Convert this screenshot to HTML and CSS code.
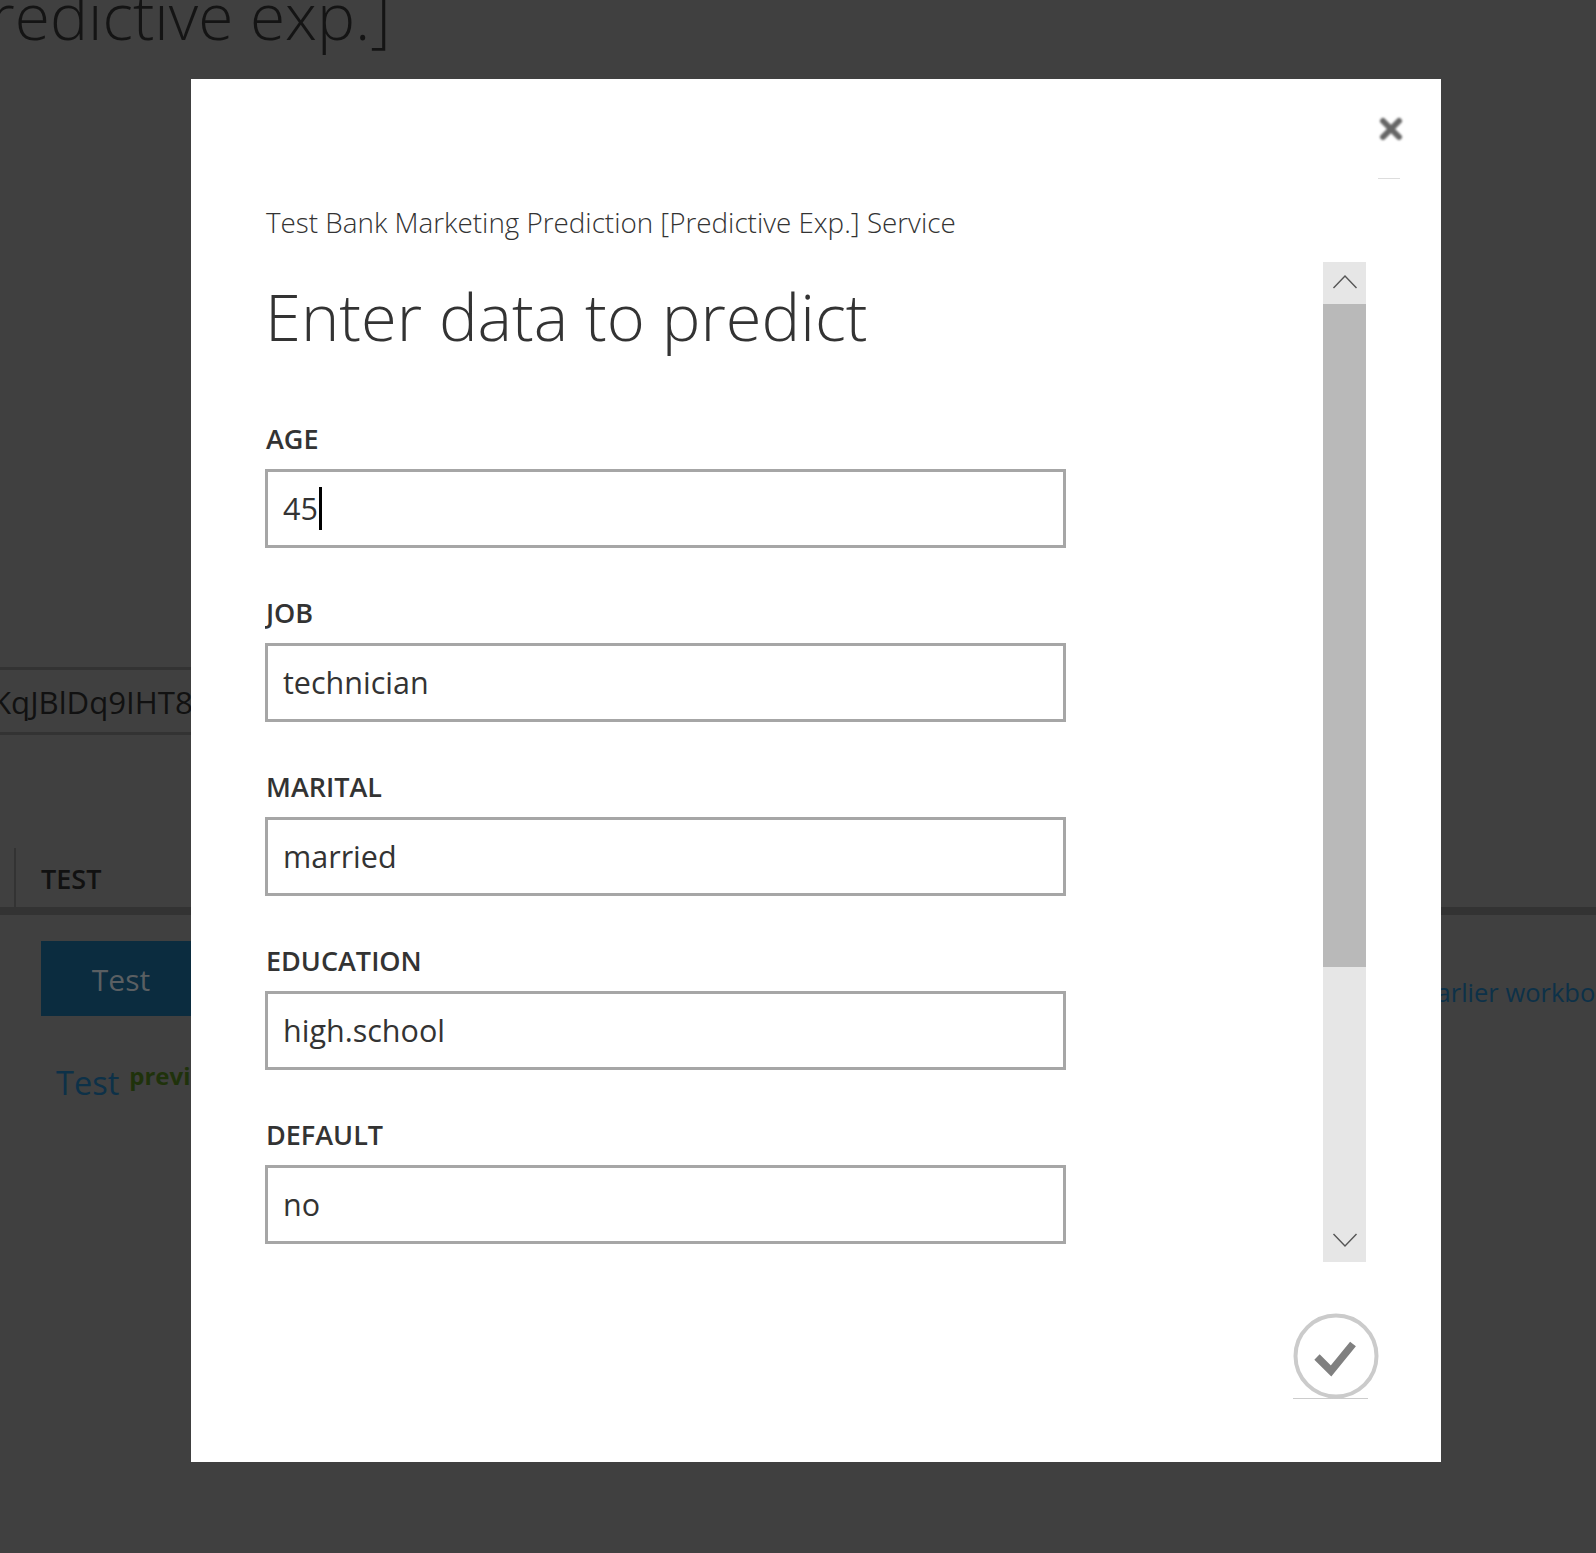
FILE: index.html
```html
<!DOCTYPE html>
<html lang="en">

<head>
    <meta charset="UTF-8">
    <meta name="viewport" content="width=device-width, initial-scale=1.0">
    <title>Enter data to predict</title>
    <link rel="stylesheet" href="styles.css">
</head>

<body>

    <!-- Page behind the dialog -->
    <div class="page">
        <div class="page-title">[Predictive exp.]</div>

        <div class="key-box">
            <span class="key-text">KqJBlDq9IHT8a</span>
        </div>

        <div class="tabs">
            <div class="tab">TEST</div>
        </div>

        <div class="actions">
            <div class="btn-test">Test</div>
            <a class="link-old">earlier workbook</a>
        </div>

        <div class="test-row">
            <a class="link-test">Test</a>
            <span class="tag-preview">preview</span>
        </div>
    </div>

    <!-- Dialog -->
    <div class="modal">
        <div class="modal-top">
            <div class="close-btn">
                <svg width="24" height="24" viewBox="0 0 24 24">
                    <path d="M4 4 L20 20 M20 4 L4 20" stroke="#666" stroke-width="6" stroke-linecap="round" />
                </svg>
            </div>
        </div>

        <div class="modal-subtitle">Test Bank Marketing Prediction [Predictive Exp.] Service</div>

        <div class="modal-middle">
            <div class="form-area">
                <h1 class="form-title">Enter data to predict</h1>

                <div class="field">
                    <div class="field-label">AGE</div>
                    <div class="field-input">45<span class="caret"></span></div>
                </div>
                <div class="field">
                    <div class="field-label">JOB</div>
                    <div class="field-input">technician</div>
                </div>
                <div class="field">
                    <div class="field-label">MARITAL</div>
                    <div class="field-input">married</div>
                </div>
                <div class="field">
                    <div class="field-label">EDUCATION</div>
                    <div class="field-input">high.school</div>
                </div>
                <div class="field">
                    <div class="field-label">DEFAULT</div>
                    <div class="field-input">no</div>
                </div>
            </div>

            <div class="scrollbar">
                <div class="scroll-arrow">
                    <svg width="26" height="16" viewBox="0 0 26 16">
                        <path d="M1.5 14 L13 2 L24.5 14" fill="none" stroke="#555" stroke-width="1.4" />
                    </svg>
                </div>
                <div class="scroll-thumb"></div>
                <div class="scroll-rest"></div>
                <div class="scroll-arrow">
                    <svg width="26" height="16" viewBox="0 0 26 16">
                        <path d="M1.5 2 L13 14 L24.5 2" fill="none" stroke="#555" stroke-width="1.4" />
                    </svg>
                </div>
            </div>
        </div>

        <div class="modal-bottom">
            <div class="ok-btn">
                <svg width="86" height="86" viewBox="0 0 86 86">
                    <circle cx="43" cy="43" r="40.5" fill="#fff" stroke="#cbcbcb" stroke-width="4" />
                    <path d="M24 44 L38 58 L60 31" fill="none" stroke="#808080" stroke-width="7.5" />
                </svg>
            </div>
        </div>
    </div>

</body>

</html>
```

FILE: styles.css
```css
* {
    box-sizing: border-box;
}

html,
body {
    height: 100%;
}

body {
    margin: 0;
    background-color: #404040;
    font-family: "Open Sans", "Liberation Sans", sans-serif;
    color: #333;
    overflow: hidden;
}

/* page behind the dialog */
.page {
    height: 1553px;
    overflow: hidden;
}

.page-title {
    margin: -30px 0 0 -68px;
    font-size: 64px;
    line-height: 92px;
    font-weight: 300;
    color: #141414;
    white-space: nowrap;
}

.key-box {
    margin-top: 605px;
    width: 800px;
    height: 68px;
    border-top: 3px solid #333;
    border-bottom: 3px solid #333;
    overflow: hidden;
}

.key-text {
    display: block;
    margin-left: -8px;
    font-size: 31.2px;
    line-height: 64px;
    color: #111;
    white-space: nowrap;
}

.tabs {
    margin-top: 113px;
    height: 67px;
    border-bottom: 8px solid #333;
    padding-left: 14px;
}

.tab {
    height: 59px;
    border-left: 2px solid #333;
    padding-left: 25px;
    font-size: 27px;
    line-height: 62px;
    font-weight: 600;
    color: #111;
}

.actions {
    margin-top: 26px;
    padding-left: 41px;
    display: flex;
    justify-content: space-between;
}

.btn-test {
    width: 160px;
    height: 75px;
    background-color: #0b2c3f;
    color: #5a5f62;
    font-size: 30px;
    line-height: 78px;
    text-align: center;
}

.link-old {
    margin-top: 31px;
    margin-right: -28px;
    font-size: 25.5px;
    line-height: 40px;
    color: #0d3148;
    white-space: nowrap;
}

.test-row {
    margin-top: 42px;
    padding-left: 56px;
    display: flex;
    align-items: flex-start;
    gap: 10px;
}

.link-test {
    font-size: 32.5px;
    line-height: 50px;
    color: #0d3148;
}

.tag-preview {
    font-size: 24px;
    line-height: 36px;
    font-weight: 700;
    color: #1f320b;
}

/* dialog */
.modal {
    position: absolute;
    left: 191px;
    top: 79px;
    width: 1250px;
    height: 1383px;
    background-color: #fff;
    display: flex;
    flex-direction: column;
}

.modal-top {
    height: 100px;
    display: flex;
    justify-content: flex-end;
    padding: 38px 41px 0 0;
}

.close-btn {
    width: 22px;
    height: 62px;
    border-bottom: 1px solid #ddd;
}

.close-btn svg {
    display: block;
    margin-left: 1px;
    filter: blur(0.8px);
}

.modal-subtitle {
    margin-left: 75px;
    height: 83px;
    padding-top: 23px;
    font-size: 27.8px;
    line-height: 40px;
    font-weight: 300;
    white-space: nowrap;
}

.modal-middle {
    height: 1000px;
    display: flex;
    justify-content: space-between;
    padding: 0 75px 0 74px;
}

.form-area {
    width: 801px;
    overflow: hidden;
}

.form-title {
    margin: 0;
    height: 150px;
    padding-top: 9px;
    font-size: 65px;
    line-height: 90px;
    font-weight: 300;
    white-space: nowrap;
}

.field {
    height: 174px;
}

.field-label {
    height: 57px;
    padding-left: 1px;
    font-size: 27px;
    line-height: 54px;
    font-weight: 600;
}

.field-input {
    height: 79px;
    border: 3px solid #a6a6a6;
    padding-left: 15px;
    font-size: 30.5px;
    line-height: 73px;
    display: flex;
    align-items: center;
}

.caret {
    width: 3px;
    height: 43px;
    margin-left: 1px;
    background-color: #000;
}

.scrollbar {
    width: 43px;
    display: flex;
    flex-direction: column;
    background-color: #e6e6e6;
}

.scroll-arrow {
    height: 42px;
    padding-bottom: 2px;
    display: flex;
    align-items: center;
    justify-content: center;
}

.scroll-thumb {
    height: 663px;
    background-color: #b9b9b9;
}

.scroll-rest {
    flex: 1;
}

.modal-bottom {
    flex: 1;
    padding: 51px 0 0 1102px;
}

.ok-btn {
    width: 75px;
    height: 86px;
    border-bottom: 1px solid #ccc;
}

.ok-btn svg {
    display: block;
    filter: blur(0.7px);
}
```
